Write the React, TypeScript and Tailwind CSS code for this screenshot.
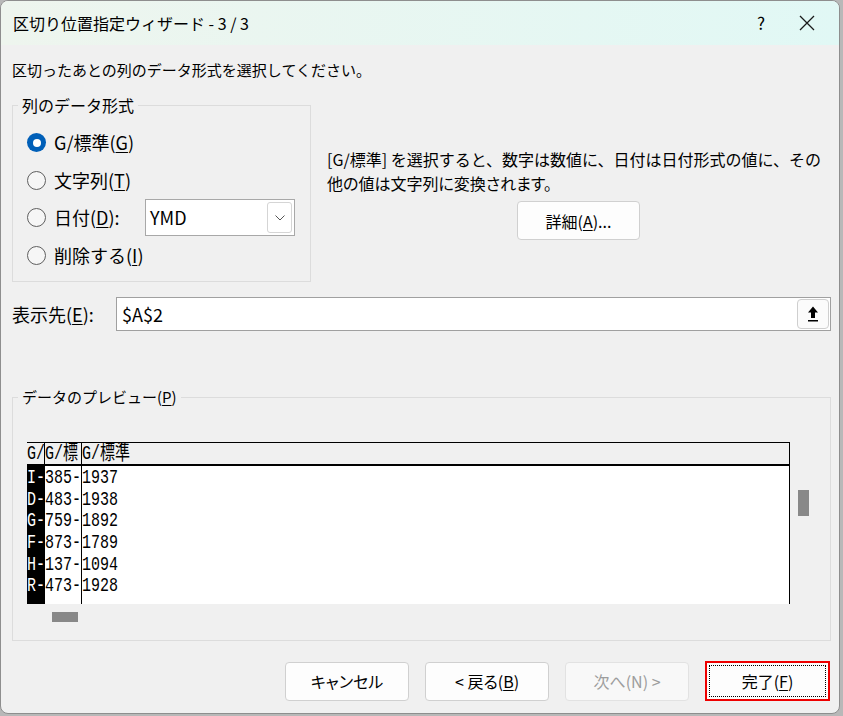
import React from "react";

function Radio({ checked }: { checked?: boolean }) {
  return checked ? (
    <span className="flex h-[19px] w-[19px] shrink-0 items-center justify-center rounded-full bg-[#005fb8]">
      <span className="h-[8px] w-[8px] rounded-full bg-white" />
    </span>
  ) : (
    <span className="h-[19px] w-[19px] shrink-0 rounded-full border border-[#5f5f5f] bg-[#f6f6f6]" />
  );
}

function Mono({ children }: { children: React.ReactNode }) {
  return (
    <span className="inline-block origin-left scale-x-[0.714] whitespace-nowrap text-[21px] leading-[21.7px]">
      {children}
    </span>
  );
}

const rows = [
  ["I-", "385-", "1937"],
  ["D-", "483-", "1938"],
  ["G-", "759-", "1892"],
  ["F-", "873-", "1789"],
  ["H-", "137-", "1094"],
  ["R-", "473-", "1928"],
];

function Btn({
  children,
  disabled,
}: {
  children: React.ReactNode;
  disabled?: boolean;
}) {
  return (
    <div
      className={
        disabled
          ? "flex h-[39px] w-[124px] items-center justify-center rounded-[4px] border border-[#e2e2e2] bg-[#f8f8f8] text-[16px] text-[#9d9d9d] [font-feature-settings:'palt']"
          : "flex h-[39px] w-[124px] items-center justify-center rounded-[4px] border border-[#d0d0d0] bg-[#fdfdfd] text-[16px] text-black [font-feature-settings:'palt']"
      }
    >
      {children}
    </div>
  );
}

export default function App() {
  return (
    <div className="h-[716px] w-[843px] bg-[#b8b8b8] font-['Noto_Sans_CJK_JP',sans-serif] text-black">
      <div className="flex h-[714px] w-[840px] flex-col overflow-hidden rounded-[8px] border border-[#8e8e8e] bg-[#f0f0f0]">
        {/* Title bar */}
        <div className="flex h-[44px] shrink-0 items-center bg-linear-to-r from-[#eef5ee] to-[#e1f8f5] pl-[12px] pr-[9px]">
          <span className="flex-1 text-[16px] leading-[20px]">区切り位置指定ウィザード - 3 / 3</span>
          <span className="flex w-[46px] justify-center text-[17px] leading-[20px]">?</span>
          <span className="flex w-[46px] justify-center">
            <svg width="16" height="16" viewBox="0 0 16 16">
              <path d="M1 1 L15 15 M15 1 L1 15" stroke="#1a1a1a" strokeWidth="1.3" fill="none" />
            </svg>
          </span>
        </div>

        {/* Body */}
        <div className="flex flex-col">
          <p className="ml-[11px] mt-[15px] h-[20px] text-[15px] leading-[20px]">
            区切ったあとの列のデータ形式を選択してください。
          </p>

          <div className="mt-[15px] flex">
            <fieldset className="ml-[11px] h-[187px] w-[299px] border border-[#dcdcdc] px-[5px] pt-[9px]">
              <legend className="px-[4px] text-[16px] leading-[20px]">列のデータ形式</legend>
              <div className="flex flex-col pl-[9px]">
                <div className="flex h-[37.5px] items-center gap-[8px]">
                  <Radio checked />
                  <span className="text-[18px]">
                    G/標準(<span className="underline underline-offset-2">G</span>)
                  </span>
                </div>
                <div className="flex h-[37.5px] items-center gap-[8px]">
                  <Radio />
                  <span className="text-[18px]">
                    文字列(<span className="underline underline-offset-2">T</span>)
                  </span>
                </div>
                <div className="flex h-[37.5px] items-center gap-[8px]">
                  <Radio />
                  <span className="w-[83px] text-[18px]">
                    日付(<span className="underline underline-offset-2">D</span>):
                  </span>
                  <div className="flex h-[37px] w-[150px] items-center border border-[#a8a8a8] bg-white pl-[4px]">
                    <span className="text-[18px]">YMD</span>
                    <span className="ml-auto mr-[2px] flex h-[31px] w-[25px] items-center justify-center rounded-[3px] border border-[#d5d5d5] bg-white">
                      <svg width="10" height="6" viewBox="0 0 10 6">
                        <path d="M0.5 0.5 L5 5 L9.5 0.5" stroke="#555" strokeWidth="1" fill="none" />
                      </svg>
                    </span>
                  </div>
                </div>
                <div className="flex h-[37.5px] items-center gap-[8px]">
                  <Radio />
                  <span className="text-[18px]">
                    削除する(<span className="underline underline-offset-2">I</span>)
                  </span>
                </div>
              </div>
            </fieldset>

            <div className="ml-[16px] flex w-[503px] flex-col items-center">
              <div className="mt-[52px] self-start text-[16px] leading-[24px]">
                <div className="whitespace-nowrap">
                  [G/標準] を選択すると、数字は数値に、日付は日付形式の値に、その
                </div>
                <div className="whitespace-nowrap [font-feature-settings:'palt']">
                  他の値は文字列に変換されます。
                </div>
              </div>
              <div className="mt-[6px] flex h-[39px] w-[123px] items-center justify-center rounded-[4px] border border-[#d0d0d0] bg-[#fdfdfd] text-[16px]">
                詳細(<span className="underline underline-offset-2">A</span>)...
              </div>
            </div>
          </div>

          {/* Destination */}
          <div className="mt-[15px] flex h-[34px] items-center">
            <span className="ml-[11px] w-[104px] text-[18px]">
              表示先(<span className="underline underline-offset-2">E</span>):
            </span>
            <div className="flex h-[34px] w-[715px] items-center border border-[#a0a0a0] bg-white pl-[5px]">
              <span className="text-[18px]">$A$2</span>
              <span className="ml-auto mr-[1px] flex h-[30px] w-[32px] items-center justify-center rounded-[4px] border border-[#cfcfcf] bg-[#fbfbfb]">
                <svg width="14" height="18" viewBox="0 0 14 18">
                  <path d="M7 1.5 L12 7.5 L9 7.5 L9 13 L5 13 L5 7.5 L2 7.5 Z" fill="#000" />
                  <rect x="2" y="15" width="10" height="1.5" fill="#000" />
                </svg>
              </span>
            </div>
          </div>

          {/* Preview */}
          <fieldset className="ml-[11px] mt-[56px] h-[254px] w-[819px] border border-[#dcdcdc] px-[5px] pt-[35px]">
            <legend className="px-[4px] text-[15px] leading-[20px]">
              データのプレビュー(<span className="underline underline-offset-2">P</span>)
            </legend>
            <div className="flex flex-col pl-[9px]">
              <div className="flex">
                <div className="flex h-[162px] w-[763px] flex-col overflow-hidden border-r border-t border-black bg-white font-['Liberation_Mono','Noto_Sans_CJK_JP',monospace]">
                  <div className="flex h-[23px] shrink-0 border-b-2 border-black bg-[#f0f0f0]">
                    <div className="w-[17px] overflow-hidden">
                      <Mono>G/</Mono>
                    </div>
                    <div className="w-px bg-black" />
                    <div className="w-[36px] overflow-hidden">
                      <Mono>G/標</Mono>
                    </div>
                    <div className="w-px bg-black" />
                    <div className="flex-1 overflow-hidden">
                      <Mono>G/標準</Mono>
                    </div>
                  </div>
                  <div className="flex flex-1">
                    <div className="flex w-[18px] flex-col overflow-hidden bg-black pt-[1px] text-white">
                      {rows.map((r) => (
                        <div key={r[0]} className="h-[21.7px]">
                          <Mono>{r[0]}</Mono>
                        </div>
                      ))}
                    </div>
                    <div className="flex w-[36px] flex-col overflow-hidden pt-[1px]">
                      {rows.map((r) => (
                        <div key={r[1]} className="h-[21.7px]">
                          <Mono>{r[1]}</Mono>
                        </div>
                      ))}
                    </div>
                    <div className="w-px bg-black" />
                    <div className="flex flex-1 flex-col overflow-hidden pt-[1px]">
                      {rows.map((r) => (
                        <div key={r[2]} className="h-[21.7px]">
                          <Mono>{r[2]}</Mono>
                        </div>
                      ))}
                    </div>
                  </div>
                </div>
                <div className="ml-[8px] mt-[48px] h-[26px] w-[11px] bg-[#888888]" />
              </div>
              <div className="ml-[25px] mt-[8px] h-[10px] w-[26px] bg-[#888888]" />
            </div>
          </fieldset>

          {/* Buttons */}
          <div className="mt-[20px] flex items-center justify-end gap-[16px] pr-[9px]">
            <Btn>キャンセル</Btn>
            <Btn>
              &lt; 戻る(<span className="underline underline-offset-2">B</span>)
            </Btn>
            <Btn disabled>次へ(N) &gt;</Btn>
            <div className="flex h-[40px] w-[125px] items-center justify-center border-2 border-[#ee0000] bg-[#fdfdfd] p-[2px]">
              <div className="flex h-full w-full items-center justify-center border border-dotted border-black text-[16px]">
                完了(<span className="underline underline-offset-2">F</span>)
              </div>
            </div>
          </div>
        </div>
      </div>
    </div>
  );
}
